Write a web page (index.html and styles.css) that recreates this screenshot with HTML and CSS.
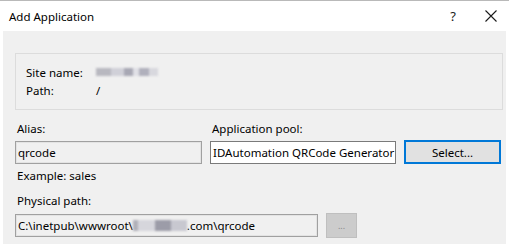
FILE: index.html
```html
<!DOCTYPE html>
<html lang="en">
<head>
    <meta charset="UTF-8">
    <title>Add Application</title>
    <link rel="stylesheet" href="styles.css">
</head>
<body>
    <div class="window">
        <div class="titlebar">
            <span class="title">Add Application</span>
            <span class="help">?</span>
            <svg class="close" width="12" height="12" viewBox="0 0 12 12">
                <path d="M0.5 0.5 L11.5 11.5 M11.5 0.5 L0.5 11.5" stroke="#1a1a1a" stroke-width="1.1" fill="none"/>
            </svg>
        </div>

        <div class="content">
            <div class="groupbox">
                <div class="info-row">
                    <span class="info-label">Site name:</span>
                    <span class="blur blur-site"></span>
                </div>
                <div class="info-row">
                    <span class="info-label">Path:</span>
                    <span>/</span>
                </div>
            </div>

            <div class="fields">
                <div class="col col-alias">
                    <label class="lbl">Alias:</label>
                    <div class="textbox readonly">qrcode</div>
                    <div class="hint">Example: sales</div>
                </div>
                <div class="col col-pool">
                    <label class="lbl">Application pool:</label>
                    <div class="textbox">IDAutomation QRCode Generator</div>
                </div>
                <div class="col col-btn">
                    <button class="btn btn-select">Select...</button>
                </div>
            </div>

            <label class="lbl lbl-path">Physical path:</label>
            <div class="path-row">
                <div class="textbox readonly path-box">C:\inetpub\wwwroot\<span class="blur blur-path"></span>.com\qrcode</div>
                <button class="btn btn-browse" disabled>...</button>
            </div>
        </div>
    </div>
</body>
</html>
```

FILE: styles.css
```css
body {
    margin: 0;
    background: #ffffff;
    font-family: 'Noto Sans', 'Liberation Sans', sans-serif;
    font-size: 11.5px;
    color: #000;
    overflow: hidden;
}
.window {
    width: 509px;
    height: 244px;
    border-top: 1px solid #b9b9b9;
    box-sizing: border-box;
    display: flex;
    flex-direction: column;
}
.titlebar {
    height: 30px;
    display: flex;
    align-items: center;
    padding-left: 9px;
    background: #fff;
}
.title {
    flex: 1;
    font-size: 11.5px;
}
.help {
    font-size: 13px;
    margin-right: 29px;
    color: #1a1a1a;
}
.close {
    margin-right: 12px;
}
.content {
    flex: 1;
    background: #f0f0f0;
    margin: 0 3px;
    padding: 22px 3px 0 12px;
}
.groupbox {
    border: 1px solid #dcdcdc;
    padding: 9px 0 0 10px;
    box-sizing: border-box;
    height: 57px;
}
.info-row {
    display: flex;
    align-items: center;
    height: 18px;
}
.info-label {
    width: 70px;
}
.blur {
    display: inline-block;
    filter: blur(1.2px);
}
.blur-site {
    width: 62px;
    height: 8px;
    background: linear-gradient(90deg, #b8b8c0 0 25%, #d0d0d8 25% 45%, #a8a8b4 45% 60%, #e0e0e6 60% 70%, #b0b0bc 70% 85%, #d8d8de 85%);
}
.blur-path {
    width: 54px;
    height: 11px;
    vertical-align: -1px;
    background: linear-gradient(90deg, #b0b0b8 0 10%, #d6d6dc 10% 40%, #9c9ca8 40% 70%, #c8c8d0 70%);
}
.fields {
    display: flex;
    margin-top: 11px;
    gap: 8px;
}
.col {
    display: flex;
    flex-direction: column;
}
.col-alias {
    width: 187px;
}
.col-pool {
    width: 186px;
}
.col-btn {
    padding-top: 19px;
}
.lbl {
    display: block;
    line-height: 16px;
    height: 16px;
    padding-left: 2px;
    margin-bottom: 4px;
}
.textbox {
    height: 23px;
    border: 1px solid #7a7a7a;
    background: #fff;
    box-sizing: border-box;
    line-height: 21px;
    padding-left: 2px;
    white-space: nowrap;
    overflow: hidden;
}
.textbox.readonly {
    background: #f0f0f0;
    border-color: #a0a0a0;
    box-shadow: inset 0 0 0 1px #e3e3e3;
}
.hint {
    margin-top: 4px;
    line-height: 16px;
    padding-left: 2px;
}
.btn {
    font-family: inherit;
    font-size: 11.5px;
    box-sizing: border-box;
    padding: 0;
}
.btn-select {
    width: 97px;
    height: 24px;
    background: #e1e1e1;
    border: 2px solid #0078d7;
    color: #000;
}
.lbl-path {
    margin-top: 9px;
}
.path-row {
    display: flex;
    gap: 8px;
    align-items: center;
}
.path-box {
    width: 303px;
}
.btn-browse {
    width: 31px;
    height: 25px;
    background: #cccccc;
    border: 1px solid #bfbfbf;
    color: #8a8a8a;
    font-size: 9px;
}
```
